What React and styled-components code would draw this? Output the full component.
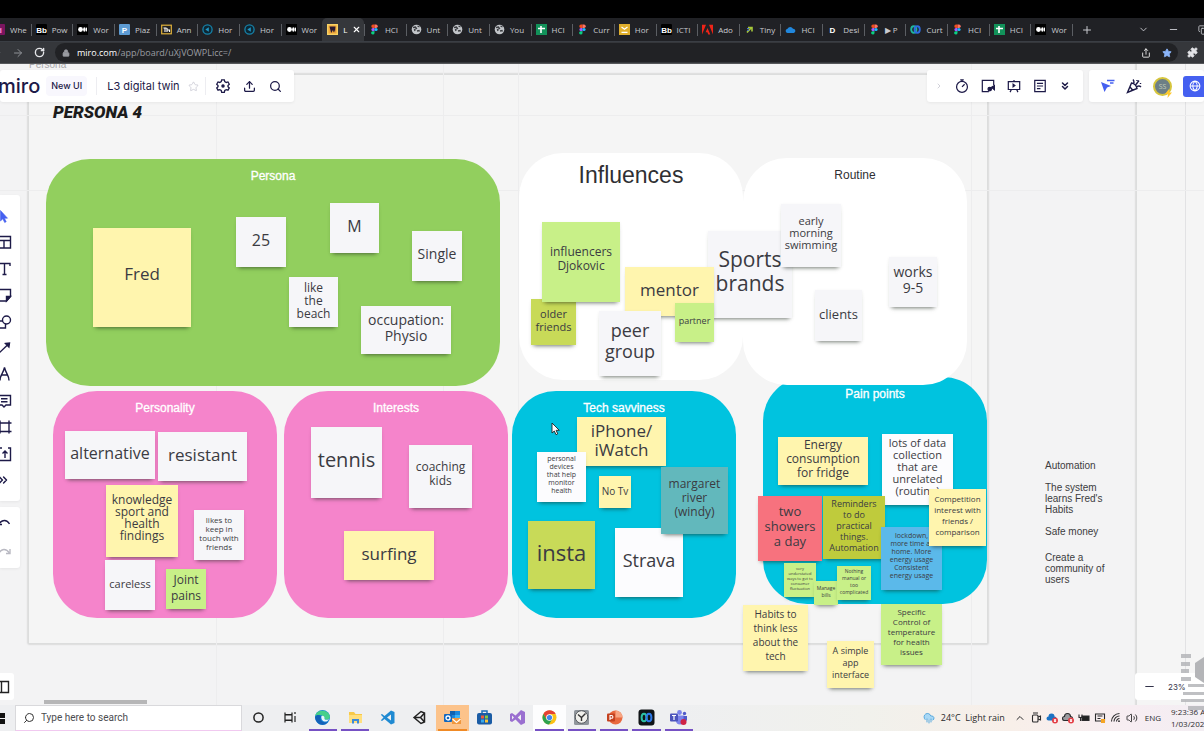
import React from "react";
import styled, { createGlobalStyle, css } from "styled-components";
import {
  ArrowRight, ChevronDown, ChevronRight, ChevronUp, ChevronsDown, ChevronsRight, CloudRain,
  Lock, Minus, Plus, Puzzle, RotateCw, Search, Share, Star, Upload,
  Volume2, X, Copy,
} from "lucide-react";

const ui = '"Open Sans", "Noto Sans", sans-serif';
const arial = '"Liberation Sans", Arial, sans-serif';
const ink = "#1d1a48";

const Global = createGlobalStyle`
  * { box-sizing: border-box; }
  body { margin: 0; font-family: ${ui}; background: #f3f3f4; overflow: hidden; }
  button { border: 0; padding: 0; margin: 0; background: none; font: inherit; color: inherit; }
  h1, h2, p { margin: 0; font-weight: 400; }
`;

const Page = styled.div`
  position: relative;
  display: flex;
  flex-direction: column;
  height: 100vh;
  overflow: hidden;
`;
const TopBlack = styled.div`
  flex: none;
  height: 18px;
  background: #000;
`;

/* ---------- browser ---------- */
const TabStrip = styled.div`
  display: flex;
  flex: none;
  height: 24px;
  background: #202125;
  color: #c9cbd0;
  border-bottom: 1px solid #3a3e44;
`;
const Tabs = styled.div`
  display: flex;
  flex: 1;
  min-width: 0;
  margin-left: -11px;
`;
const Tab = styled.button`
  flex: 1;
  min-width: 0;
  display: flex;
  align-items: center;
  gap: 5px;
  padding: 0 0 0 5px;
  font-size: 8px;
  line-height: 12px;
  text-align: left;
  white-space: nowrap;
  background: linear-gradient(#5b5e63, #5b5e63) 0 6px / 1px 12px no-repeat;
  svg { flex: none; }
  ${(p) => p.$active && css`
    background: #35373b;
    border-radius: 5px 5px 0 0;
    color: #fff;
  `}
`;
const WindowControls = styled.div`
  flex: none;
  width: 132px;
  display: flex;
  align-items: center;
  padding-left: 9px;
  background: linear-gradient(#5b5e63, #5b5e63) 0 6px / 1px 12px no-repeat;
  overflow: hidden;
  button { display: flex; align-items: center; justify-content: center; flex: none; width: 12px; height: 12px; }
  button:nth-child(2) { margin-left: 44px; }
  button:nth-child(3) { margin-left: 18px; }
  button:nth-child(4) { margin-left: 18px; }
`;
const AddressRow = styled.div`
  display: flex;
  align-items: center;
  flex: none;
  height: 22px;
  background: #35373b;
  color: #d6d8dc;
  border-bottom: 1px solid #55575a;
  button { display: flex; flex: none; }
`;
const NavButtons = styled.div`
  display: flex;
  flex: none;
  align-items: center;
  gap: 10px;
  width: 54px;
  margin-left: -9px;
  color: #8f9297;
  button:last-child { color: #e4e5e8; }
`;
const Omnibox = styled.label`
  flex: 1;
  display: flex;
  align-items: center;
  height: 19px;
  padding: 0 6px 0 7px;
  margin-left: 10px;
  border-radius: 10px;
  background: #212225;
  font-size: 9px;
  line-height: 12px;
  color: #fff;
  > svg { margin-right: 7px; }
  input {
    flex: 1;
    border: 0;
    padding: 0;
    background: none;
    font: inherit;
    color: #9a9ca1;
    outline: none;
  }
`;
const OmniActions = styled.span`
  display: flex;
  gap: 11px;
`;
const Extension = styled.button`
  width: 26px;
  padding-left: 9px;
  overflow: hidden;
`;

const Glyph = ({ t, bg, fg, r = 1 }) => (
  <svg width="11" height="11" viewBox="0 0 11 11">
    <rect width="11" height="11" rx={r} fill={bg} />
    <text x="5.5" y="8.5" textAnchor="middle" fontSize="8" fontWeight="700" fontFamily="Liberation Sans, sans-serif" fill={fg}>{t}</text>
  </svg>
);
const icons = {
  id: () => <Glyph t="d" bg="#7a1560" fg="#ff8ad8" />,
  bb: () => <Glyph t="Bb" bg="#000" fg="#fff" />,
  p: () => <Glyph t="P" bg="#5d9bd3" fg="#fff" />,
  d: () => <Glyph t="D" bg="#202125" fg="#fff" />,
  medium: () => (
    <svg width="11" height="11" viewBox="0 0 11 11">
      <rect width="11" height="11" fill="#000" />
      <circle cx="3.5" cy="5.5" r="2.4" fill="#fff" />
      <ellipse cx="7.4" cy="5.5" rx="1.3" ry="2.2" fill="#fff" />
      <rect x="9" y="3.6" width="1" height="3.8" fill="#fff" />
    </svg>
  ),
  ann: () => (
    <svg width="11" height="11" viewBox="0 0 11 11">
      <rect x=".7" y="1.2" width="9.6" height="8.6" fill="#222" stroke="#e2b33c" strokeWidth="1.2" />
      <path d="M2.5 4h3M4 4v4M6 4v4M6 6h2.5v2" stroke="#fff" strokeWidth="1.1" fill="none" />
    </svg>
  ),
  ring: () => (
    <svg width="11" height="11" viewBox="0 0 11 11">
      <circle cx="5.5" cy="5.5" r="4.6" fill="#0d2734" stroke="#1583ab" strokeWidth="1.3" />
      <path d="M6.800 3.300v4.400L3.300 5.500z" fill="#2196c4" />
    </svg>
  ),
  miro: () => (
    <svg width="11" height="11" viewBox="0 0 11 11">
      <rect x=".7" y=".7" width="9.6" height="9.6" fill="#f0a63a" stroke="#f8d263" strokeWidth="1.4" />
      <path d="M2.500 2.500h6L8 8.500 7 6l-.6 2.500L5.300 6l-.5 2.500H4z" fill="#2a1a30" />
    </svg>
  ),
  figma: () => (
    <svg width="11" height="11" viewBox="0 0 11 11">
      <path d="M5.5 .5H4a1.7 1.7 0 0 0 0 3.4h1.5z" fill="#f24e1e" />
      <path d="M5.5 .5H7a1.7 1.7 0 0 1 0 3.4H5.5z" fill="#ff7262" />
      <path d="M5.5 3.9H4a1.6 1.6 0 0 0 0 3.3h1.5z" fill="#a259ff" />
      <circle cx="7" cy="5.5" r="1.6" fill="#1abcfe" />
      <path d="M5.5 7.2H4a1.7 1.7 0 1 0 1.5 1.7z" fill="#0acf83" />
    </svg>
  ),
  globe: () => (
    <svg width="11" height="11" viewBox="0 0 11 11">
      <circle cx="5.5" cy="5.5" r="4.8" fill="#c2c5c9" />
      <path d="M2 3.500 4.500 3l1 1.500-2 1 .5 1.500M6 7l2-.5.5 1M6.500 2l2 1" fill="none" stroke="#3a3c40" strokeWidth="1.300" />
    </svg>
  ),
  sheet: () => (
    <svg width="11" height="11" viewBox="0 0 11 11">
      <rect width="11" height="11" fill="#12925a" />
      <path d="M5 2v7M2 4.5h7" stroke="#fff" strokeWidth="1.6" />
    </svg>
  ),
  note: () => (
    <svg width="11" height="11" viewBox="0 0 11 11">
      <rect width="11" height="11" fill="#dfae2c" />
      <path d="M2.500 8.300h6M2.500 3l3 2.200L8.500 3" stroke="#fff" strokeWidth="1.300" fill="none" />
    </svg>
  ),
  adobe: () => (
    <svg width="11" height="11" viewBox="0 0 11 11">
      <path d="M0 .8h4L0 10.4zM7 .8h4v9.6zM5.500 4l2.800 6.400H6.200L5.400 8.300H3.600z" fill="#ee2418" />
    </svg>
  ),
  tiny: () => (
    <svg width="11" height="11" viewBox="0 0 11 11">
      <path d="M3 8.5 7 4M4 3.5h4v4" stroke="#a5c83a" strokeWidth="1.6" fill="none" />
      <path d="M3 4.5h2M3 6.3h2" stroke="#4b77d1" strokeWidth="1" />
    </svg>
  ),
  cloud: () => (
    <svg width="11" height="11" viewBox="0 0 11 11">
      <path d="M2.300 9a2.200 2.200 0 0 1 .2-4.300A3 3 0 0 1 8 4.700 2.200 2.200 0 0 1 8.800 9z" fill="#2187dc" />
    </svg>
  ),
  webex: () => (
    <svg width="11" height="11" viewBox="0 0 11 11">
      <ellipse cx="3.800" cy="5.500" rx="2.600" ry="3.300" fill="none" stroke="#1fb79c" strokeWidth="1.900" />
      <ellipse cx="7.200" cy="5.500" rx="2.600" ry="3.300" fill="none" stroke="#2d6be0" strokeWidth="1.900" />
    </svg>
  ),
};

const tabs = [
  ["id", "Whe"], ["bb", "Pow"], ["medium", "Wor"], ["p", "Piaz"], ["ann", "Ann"], ["ring", "Hor"],
  ["ring", "Hor"], ["medium", "Wor"], ["miro", "L", true], ["figma", "HCI"], ["globe", "Unt"],
  ["globe", "Unt"], ["globe", "You"], ["sheet", "HCI"], ["figma", "Curr"], ["note", "Hor"],
  ["bb", "ICTI"], ["adobe", "Ado"], ["tiny", "Tiny"], ["cloud", "HCI"], ["d", "Desi"], ["figma", "▶ P"],
  ["webex", "Curt"], ["figma", "HCI"], ["sheet", "HCI"], ["medium", "Wor"],
];

/* ---------- board ---------- */
const Board = styled.main`
  position: relative;
  flex: 1;
  overflow: hidden;
  background: #f3f3f4;
`;
const Frame = styled.div`
  position: absolute;
  left: ${(p) => p.$x}px;
  top: ${(p) => p.$y}px;
  width: ${(p) => p.$w}px;
  height: ${(p) => p.$h}px;
  background: #f5f5f5;
  border: 1px solid #dcdddd;
  box-shadow: 0 0 2px rgba(0, 0, 0, 0.25);
`;
const GridLine = styled.div`
  position: absolute;
  background: ${(p) => (p.$strong ? "#e2e2e4" : "#ededee")};
  ${(p) => (p.$x !== undefined
    ? css`left: ${p.$x}px; top: 0; bottom: 0; width: 1px;`
    : css`top: ${p.$y}px; left: 0; right: 0; height: 1px;`)}
`;
const FrameName = styled.p`
  position: absolute;
  left: 29px;
  top: -6px;
  font: 10px/14px ${arial};
  color: #a9a9ab;
`;
const BoardTitle = styled.h1`
  position: absolute;
  left: 53px;
  top: 37px;
  font: italic 900 17px/22px Roboto, sans-serif;
  color: #1c1c1c;
  white-space: nowrap;
`;
const Area = styled.section`
  position: absolute;
  left: ${(p) => p.$x}px;
  top: ${(p) => p.$y}px;
  width: ${(p) => p.$w}px;
  height: 227px;
  padding-top: 10px;
  border-radius: 44px;
  background: ${(p) => p.$bg};
  color: ${(p) => (p.$bg === "#ffffff" ? "#2f2f33" : "#fff")};
  text-align: center;
  font-family: ${arial};
`;
const AreaTitle = styled.h2`
  font-size: ${(p) => (p.$big ? 23 : 12)}px;
  line-height: ${(p) => (p.$big ? 24 : 14)}px;
  -webkit-text-stroke: ${(p) => (p.$light ? "0.3px #fff" : "0")};
`;
const paper = {
  yellow: "#fff5ae",
  white: "#f6f6f9",
  pure: "#fcfcfe",
  lime: "#c8f088",
  olive: "#c8da58",
  moss: "#bfcb3c",
  teal: "#62b8bc",
  blue: "#5bb9ea",
  red: "#f7727e",
};
const Note = styled.div`
  position: absolute;
  left: ${(p) => p.$x}px;
  top: ${(p) => p.$y}px;
  width: ${(p) => p.$w}px;
  height: ${(p) => p.$h}px;
  display: flex;
  align-items: center;
  justify-content: center;
  padding-bottom: ${(p) => Math.round(p.$h / 12)}px;
  background: ${(p) => paper[p.$c]};
  box-shadow: 0 4px 4px -3px rgba(30, 40, 30, 0.55), 0 1px 3px rgba(30, 40, 30, 0.08);
  color: #3b3b42;
  text-align: center;
  white-space: pre;
  font-size: ${(p) => p.$s}px;
  line-height: ${(p) => p.$l}px;
`;
const SideText = styled.div`
  position: absolute;
  left: 1045px;
  top: 396px;
  display: flex;
  flex-direction: column;
  gap: 11px;
  font: 10px/11px ${arial};
  color: #3c3c40;
  white-space: pre-line;
  p:last-child { margin-top: 4px; }
`;

const areas = [
  ["Persona", 46, 95, 454, "#92cf5e"],
  ["Influences", 519, 89, 224, "#ffffff"],
  ["Pain points", 763, 313, 224, "#00c3df"],
  ["Routine", 743, 94, 224, "#ffffff"],
  ["Personality", 53, 327, 224, "#f584cb"],
  ["Interests", 284, 327, 224, "#f584cb"],
  ["Tech savviness", 512, 327, 224, "#00c3df"],
];

/* text, x, y, width, height, paper, font size, line height */
const notes = [
  ["Fred", 93, 164, 98, 99, "yellow", 17, 20],
  ["25", 236, 153, 50, 50, "white", 16, 20],
  ["M", 330, 139, 49, 50, "white", 16, 20],
  ["Single", 412, 167, 50, 50, "white", 14, 16],
  ["like\nthe\nbeach", 289, 213, 49, 50, "white", 12, 13],
  ["occupation:\nPhysio", 361, 242, 90, 48, "white", 14, 16],
  ["older\nfriends", 531, 235, 45, 46, "olive", 11, 13],
  ["influencers\nDjokovic", 542, 158, 78, 80, "lime", 12, 14],
  ["Sports\nbrands", 708, 167, 84, 87, "white", 21, 24],
  ["mentor", 625, 203, 89, 49, "yellow", 17, 20],
  ["partner", 675, 239, 39, 39, "lime", 9, 12],
  ["peer\ngroup", 599, 247, 62, 65, "white", 18, 21],
  ["early\nmorning\nswimming", 781, 140, 60, 63, "white", 11, 12],
  ["works\n9-5", 889, 193, 48, 50, "white", 14, 16],
  ["clients", 815, 226, 47, 51, "white", 13, 16],
  ["alternative", 65, 367, 90, 48, "white", 16, 20],
  ["resistant", 158, 368, 89, 49, "white", 17, 20],
  ["knowledge\nsport and\nhealth\nfindings", 106, 421, 72, 72, "yellow", 12, 12],
  ["likes to\nkeep in\ntouch with\nfriends", 194, 446, 50, 50, "white", 8, 9],
  ["careless", 105, 496, 50, 50, "white", 11, 13],
  ["Joint\npains", 166, 505, 40, 40, "lime", 12, 16],
  ["tennis", 311, 363, 71, 71, "white", 20, 24],
  ["coaching\nkids", 409, 381, 63, 63, "white", 12, 14],
  ["surfing", 344, 467, 90, 49, "yellow", 17, 20],
  ["iPhone/\niWatch", 577, 353, 89, 49, "yellow", 17, 19],
  ["personal\ndevices\nthat help\nmonitor\nhealth", 537, 388, 49, 50, "pure", 7, 8],
  ["No Tv", 599, 412, 32, 32, "yellow", 10, 12],
  ["insta", 528, 457, 67, 68, "olive", 22, 26],
  ["Strava", 615, 464, 68, 69, "pure", 18, 22],
  ["margaret\nriver\n(windy)", 661, 403, 67, 67, "teal", 12, 14],
  ["Energy\nconsumption\nfor fridge", 778, 373, 90, 48, "yellow", 12, 14],
  ["lots of data\ncollection\nthat are\nunrelated\n(routine)", 882, 370, 71, 71, "pure", 11, 12],
  ["two\nshowers\na day", 758, 432, 64, 65, "red", 13, 15],
  ["Reminders\nto do\npractical\nthings.\nAutomation", 823, 432, 62, 63, "moss", 9, 11],
  ["lockdown,\nmore time at\nhome. More\nenergy usage\nConsistent\nenergy usage", 881, 463, 61, 63, "blue", 7, 8],
  ["Competition\ninterest with\nfriends /\ncomparison", 929, 425, 57, 57, "yellow", 8, 11],
  ["very\nunderstated\nways to get to\nconsumer\nfluctuation", 784, 499, 32, 34, "lime", 4, 5],
  ["Manage\nbills", 814, 517, 24, 24, "lime", 5, 7],
  ["Nothing\nmanual or\ntoo\ncomplicated", 837, 502, 34, 34, "lime", 5, 7],
  ["Habits to\nthink less\nabout the\ntech", 743, 541, 65, 66, "yellow", 10, 14],
  ["A simple\napp\ninterface", 827, 577, 47, 47, "yellow", 9, 12],
  ["Specific\nControl of\ntemperature\nfor health\nissues", 881, 540, 61, 61, "lime", 8, 10],
];

const Pointer = styled.svg`
  position: absolute;
  left: 551px;
  top: 358px;
`;

/* ---------- board chrome ---------- */
const TopBars = styled.div`
  position: absolute;
  top: 6px;
  left: 0;
  right: 0;
  display: flex;
  align-items: stretch;
  gap: 6px;
  height: 32px;
  color: ${ink};
`;
const Bar = styled.div`
  display: flex;
  align-items: center;
  gap: ${(p) => p.$gap}px;
  padding: ${(p) => p.$pad};
  background: #fff;
  border-radius: 3px;
  box-shadow: 0 1px 3px rgba(0, 0, 0, 0.06);
  overflow: hidden;
  white-space: nowrap;
  button { display: flex; flex: none; }
`;
const Spacer = styled.div`
  flex: 1;
`;
const Logo = styled.a`
  margin-left: -2px;
  font: 500 20px/24px Inter, sans-serif;
  color: ${ink};
  text-decoration: none;
`;
const NewUi = styled.span`
  padding: 0 5px;
  margin-left: 6px;
  border-radius: 4px;
  background: #f8f7fd;
  font: 500 9px/20px Inter, sans-serif;
`;
const BoardName = styled.span`
  padding-left: 10px;
  margin-left: 9px;
  border-left: 1px solid #ededf1;
  font: 400 11px/18px Inter, sans-serif;
`;
const ToolGroup = styled.div`
  display: flex;
  align-items: center;
  gap: 13px;
  padding-left: 10px;
  margin-left: 6px;
  border-left: 1px solid #ededf1;
  height: 18px;
`;
const StarButton = styled.button`
  margin-left: 8px;
  color: #c3c3cf;
`;
const Avatar = styled.button`
  position: relative;
  width: 19px;
  height: 19px;
  border: 2px solid #d6c53c;
  border-radius: 50%;
  background: #6d7f86;
  color: #c3cdb9;
  font-size: 7px;
  align-items: center;
  justify-content: center;
  svg { position: absolute; right: -3px; bottom: -4px; }
`;
const ShareButton = styled.button`
  width: 21px;
  height: 21px;
  padding-left: 6px;
  align-items: center;
  border-radius: 3px 0 0 3px;
  background: #4560f0;
`;
const SideTools = styled.nav`
  position: absolute;
  left: 0;
  top: 131px;
  display: flex;
  flex-direction: column;
  gap: 6px;
`;
const SideGroup = styled.div`
  display: flex;
  flex-direction: column;
  justify-content: space-between;
  width: 20px;
  height: ${(p) => p.$h}px;
  padding: ${(p) => p.$pad}px 0;
  background: #fff;
  border-radius: 0 3px 3px 0;
  box-shadow: 0 1px 3px rgba(0, 0, 0, 0.06);
  overflow: hidden;
  color: ${ink};
  button { display: flex; align-items: center; margin-left: -4px; width: 16px; height: 16px; }
`;
const PanelToggle = styled.button`
  position: absolute;
  left: 0;
  bottom: 5px;
  display: flex;
  align-items: center;
  width: 14px;
  height: 27px;
  overflow: hidden;
  background: #fff;
  border-radius: 0 3px 3px 0;
  svg { flex: none; margin-left: -4px; }
`;
const ScrollThumb = styled.div`
  position: absolute;
  left: 44px;
  bottom: 1px;
  width: 103px;
  height: 4px;
  background: #b6b6b7;
`;
const ZoomBar = styled.div`
  position: absolute;
  right: 0;
  bottom: 5px;
  display: flex;
  align-items: center;
  gap: 12px;
  width: 69px;
  height: 27px;
  padding-left: 8px;
  background: #fff;
  border-radius: 3px 0 0 3px;
  font: 8px/12px Inter, sans-serif;
  color: #33334a;
  button { display: flex; }
`;
const Watermark = styled.svg`
  position: absolute;
  right: 0;
  bottom: 18px;
`;
const SearchIcon = styled(Search)`
  flex: none;
  transform: scaleX(-1);
`;

const S = ({ children, size = 16, ...p }) => (
  <svg width={size} height={size} viewBox="0 0 16 16" fill="none" stroke="currentColor" strokeWidth="1.4" {...p}>{children}</svg>
);
const sideTools = [
  ["Select", <S key="a" fill="#4560f0" stroke="#4560f0"><path d="M4.500 2.500v10.500l2.300-2.200 1.900 3.700 1.500-.8-1.800-3.500h3.100z" strokeWidth=".6" /></S>],
  ["Templates", <S key="b"><path d="M2 2.500h12.500v11.500H2zM2 6.500h12.500M8 6.500V14" /></S>],
  ["Text", <S key="c"><path d="M3 5V2.500h11V5M8.500 2.500v11M6.500 13.500h4" /></S>],
  ["Sticky note", <S key="d"><path d="M2 2.500h12.500v7l-4 4.500H2z" /><path d="M14.500 9.500h-4V14z" fill="currentColor" /></S>],
  ["Shapes", <S key="e"><circle cx="10.500" cy="6" r="4" /><path d="M7 7H2v7h7.500v-4" /></S>],
  ["Connection line", <S key="f"><path d="M2 14 12 4.500" /><path d="M9.500 3.500 13.500 3l-.6 4z" fill="currentColor" /></S>],
  ["Pen", <S key="g"><path d="M4 14.500C4 9 7 8 8.500 1.500 10 8 13 9 13 14.500M6 9h5" /></S>],
  ["Comment", <S key="h"><path d="M2 2.500h12.500V12H10l-2 2-2-2H2zM5 5.800h6.500M5 8.700h6.500" /></S>],
  ["Frame", <S key="i"><path d="M4 1.500v13M13 1.500v13M1 4h14.500M1 12.500h14.500" /></S>],
  ["Upload", <S key="j"><path d="M6 2H2v12.500h12.500V2H12M9 12V5M6.500 7.500 9 5l2.500 2.500" /></S>],
];

/* ---------- taskbar ---------- */
const Taskbar = styled.footer`
  flex: none;
  display: flex;
  align-items: stretch;
  height: 26px;
  overflow: hidden;
  background: linear-gradient(90deg, #eeeff1 0 56%, #f1f1ec 72%, #f8efe9 84%, #f7edf2 94%, #f3eef3);
  color: #2b2b2d;
`;
const StartButton = styled.button`
  flex: none;
  width: 15px;
  display: flex;
  align-items: center;
`;
const SearchBox = styled.label`
  flex: none;
  display: flex;
  align-items: center;
  gap: 6px;
  width: 227px;
  padding: 0 7px;
  background: #fff;
  border: 1px solid #d9d9dc;
  border-bottom-color: #f1c9f0;
  input {
    flex: 1;
    min-width: 0;
    border: 0;
    padding: 0;
    background: none;
    font: 10px/14px Roboto, sans-serif;
    outline: none;
  }
  input::placeholder { color: #4c4c50; opacity: 1; }
`;
const Apps = styled.div`
  display: flex;
  flex: none;
  width: 453px;
`;
const AppButton = styled.button`
  flex: 1;
  display: flex;
  align-items: center;
  justify-content: center;
  background: ${(p) => p.$bg || "transparent"};
  border-bottom: 2px solid transparent;
  padding-top: 1px;
  border-image: ${(p) => (p.$line ? `linear-gradient(90deg, transparent 8%, ${p.$line} 8% 92%, transparent 92%) 1` : "none")};
`;
const Tray = styled.div`
  display: flex;
  align-items: center;
  gap: 4px;
  margin-left: auto;
  flex: none;
  font-size: 9px;
  line-height: 14px;
  white-space: nowrap;
  button { display: flex; flex: none; }
`;
const Weather = styled.button`
  display: flex;
  align-items: center;
  gap: 6px;
  margin-right: 5px;
`;
const Lang = styled.button`
  margin-left: 3px;
  font-size: 8px;
`;
const Clock = styled.time`
  flex: none;
  width: 33px;
  margin-left: 6px;
  overflow: hidden;
  font-size: 8px;
  line-height: 12px;
`;

const A = ({ children }) => <svg width="17" height="17" viewBox="0 0 17 17" fill="none">{children}</svg>;
const purple = "#7651c4";
const apps = [
  ["Cortana", <A key="1"><circle cx="8.500" cy="8.500" r="4.600" stroke="#222" strokeWidth="1.500" /></A>],
  ["Task view", <A key="2"><path d="M3 3.500v2M3 11.500v2M10 3.500v2M10 11.500v2M3 5.500h7M3 11.500h7M3 6v5h7V6zM13 3v2M13 7v6" stroke="#222" strokeWidth="1.200" /></A>],
  ["Edge", <A key="3"><circle cx="8.500" cy="8.500" r="7.500" fill="#1a86d6" /><path d="M1.200 7C2.500 0 14 0 15.900 7c.5 4-4 4.200-5.400 3 1-3-5-5.500-9.300-3z" fill="#46cf8a" /><path d="M1 8c2-3 6-2 6 0-2 4 3 7 7 4.500C11 18 2 16.500 1 8z" fill="#1462b8" /><path d="M7.300 7.500c1-1.500 3.600-.3 3.200 2-.3 1.300 2.500 2 4.500.5-1.500 4-8 3.500-7.700-2.500z" fill="#eaf6fb" /></A>, purple],
  ["File Explorer", <A key="4"><path d="M2 3h5l1.500 2H15v9H2z" fill="#f7c948" /><path d="M2 6h13v8H2z" fill="#ffdf7e" /><path d="M5 14.500V10h7v4.500h-2V12H7v2.500z" fill="#3d8ad8" /></A>, purple],
  ["VS Code", <A key="5"><path d="M12 1.500 15.500 3v11L12 15.500 5.500 10 3 12l-1.200-.8L4.500 8.500 1.800 5.800 3 5l2.500 2zM12 5.500 8 8.500l4 3z" fill="#1f8ad2" fillRule="evenodd" /></A>],
  ["Unity", <A key="6"><path d="m3 8.500 7-6 3.500 1.500v9L10 14.500zM3 8.500h6.500M13.500 4l-4 4.500 4 4.500" stroke="#222" strokeWidth="1.500" /></A>],
  ["Outlook", <A key="7"><path d="M6 2h10v9H6z" fill="#1c87dc" /><path d="M6 2h5v4H6z" fill="#1061b0" /><path d="M11 6h5v4h-5z" fill="#3fb4f5" /><path d="M8 9h9v6H8z" fill="#f0983e" /><path d="m8.500 10 4 3.500 4-3.500" stroke="#fff" strokeWidth="1.200" /><rect x="0" y="5" width="8" height="8" rx="1" fill="#1267bd" /><circle cx="4" cy="9" r="2" stroke="#fff" strokeWidth="1.300" /></A>, "#f08a25", "#fcc38b"],
  ["Store", <A key="8"><path d="M6 4V2h5v2" stroke="#1d6eb8" strokeWidth="1.500" /><rect x="1" y="4" width="15" height="11.500" rx="2" fill="#1a5ca5" /><path d="M5 6.500h3v3H5z" fill="#ef5b3b" /><path d="M9 6.500h3v3H9z" fill="#8bcb3c" /><path d="M5 10.500h3v3H5z" fill="#37a9ea" /><path d="M9 10.500h3v3H9z" fill="#fbc53a" /></A>],
  ["Visual Studio", <A key="9"><path d="M12 1 16 3v11l-4 2-5.500-5.500L3 13l-2-1V5l2-1 3.500 2.500zM12 5.500 8.700 8.500l3.300 3zM3 6.500v4l2-2z" fill="#9a6fd0" fillRule="evenodd" /></A>],
  ["Chrome", <A key="10"><circle cx="8.500" cy="8.500" r="7" fill="#fbc116" /><path d="M2.400 5A7 7 0 0 1 14.700 5H8.500L5.500 10.200z" fill="#e44134" /><path d="M2.400 5A7 7 0 0 0 8 15.500l3.200-5.200-5.700-.1z" fill="#2da14f" /><circle cx="8.500" cy="8.500" r="3.300" fill="#fff" /><circle cx="8.500" cy="8.500" r="2.600" fill="#4186ee" /></A>, purple, "#fdfdfe"],
  ["Clock", <A key="11"><rect x="1" y="1" width="15" height="15" rx="1.500" fill="#8f959b" /><circle cx="8.500" cy="8" r="6.300" fill="#f0f0ec" stroke="#55595e" /><path d="m5 5.500 3.500 3 4-4M8.500 8.500V12" stroke="#333" strokeWidth="1.400" /></A>, purple],
  ["PowerPoint", <A key="12"><circle cx="9.500" cy="8.500" r="7" fill="#e9693f" /><path d="M9.500 1.500a7 7 0 0 1 7 7h-7z" fill="#f7a583" /><rect x="1" y="4.500" width="8" height="8" rx="1" fill="#c4411f" /><path d="M4 11V6.500h1.500a1.300 1.300 0 0 1 0 2.800H4" stroke="#fff" strokeWidth="1.100" /></A>, purple],
  ["Webex", <A key="13"><rect x=".5" y=".5" width="16" height="16" rx="3" fill="#101417" /><ellipse cx="6" cy="8.500" rx="2.400" ry="3.800" stroke="#2cc0a5" strokeWidth="2" /><ellipse cx="11" cy="8.500" rx="2.400" ry="3.800" stroke="#2f7bea" strokeWidth="2" /></A>, purple],
  ["Teams", <A key="14"><circle cx="9.500" cy="3.500" r="2.400" fill="#7b83eb" /><circle cx="14.500" cy="4.500" r="1.700" fill="#5059c9" /><path d="M6 6.500h8v5a4 4 0 0 1-8 0z" fill="#7b83eb" /><path d="M13.500 7H17v4a3 3 0 0 1-3.500 2z" fill="#5059c9" /><rect x="0" y="4.500" width="8" height="8" rx="1" fill="#4b53bc" /><path d="M2 6.500h4M4 6.500v4.500" stroke="#fff" strokeWidth="1.200" /><circle cx="13.500" cy="13" r="3" fill="#cf2346" /></A>, purple],
];
const T = ({ children }) => <svg width="12" height="12" viewBox="0 0 12 12" fill="none" stroke="#2b2b2d" strokeWidth="1.100">{children}</svg>;

export default function App() {
  return (
    <Page>
      <Global />
      <TopBlack />
      <TabStrip>
        <Tabs role="tablist">
          {tabs.map(([icon, name, active], i) => {
            const Icon = icons[icon];
            return (
              <Tab key={i} role="tab" $active={active} aria-selected={!!active}>
                <Icon />
                <span>{name}</span>
                {active && <X size={9} strokeWidth={3} />}
              </Tab>
            );
          })}
        </Tabs>
        <WindowControls>
          <button aria-label="New tab"><Plus size={12} /></button>
          <button aria-label="Search tabs"><ChevronDown size={11} /></button>
          <button aria-label="Minimize"><Minus size={11} /></button>
          <button aria-label="Restore"><Copy size={10} /></button>
        </WindowControls>
      </TabStrip>
      <AddressRow>
        <NavButtons>
          <button aria-label="Back"><ArrowRight size={11} /></button>
          <button aria-label="Forward"><ArrowRight size={12} /></button>
          <button aria-label="Reload"><RotateCw size={11} strokeWidth={3} /></button>
        </NavButtons>
        <Omnibox>
          <Lock size={8} fill="#9a9ca1" color="#9a9ca1" />
          miro.com
          <input aria-label="Address" defaultValue="/app/board/uXjVOWPLicc=/" />
          <OmniActions>
            <button aria-label="Share page"><Share size={10} /></button>
            <button aria-label="Bookmark"><Star size={10} fill="#8ab4f8" color="#8ab4f8" /></button>
          </OmniActions>
        </Omnibox>
        <Extension aria-label="Extensions"><Puzzle size={11} fill="#e4e5e8" /></Extension>
      </AddressRow>

      <Board>
        <Frame $x={28} $y={10} $w={960} $h={570} />
        <Frame $x={1136} $y={-10} $w={200} $h={680} />
        <GridLine $x={216} />
        <GridLine $x={443} />
        <GridLine $x={518} />
        <GridLine $x={971} />
        <GridLine $x={1185} $strong />
        <GridLine $y={51} />
        <GridLine $y={126} />
        <FrameName>Persona</FrameName>
        <BoardTitle>PERSONA 4</BoardTitle>
        {areas.map(([title, x, y, w, bg]) => (
          <Area key={title} $x={x} $y={y} $w={w} $bg={bg}>
            <AreaTitle $big={title === "Influences"} $light={bg !== "#ffffff"}>{title}</AreaTitle>
          </Area>
        ))}
        {notes.map(([text, x, y, w, h, c, s, l]) => (
          <Note key={text} $x={x} $y={y} $w={w} $h={h} $c={c} $s={s} $l={l}>{text}</Note>
        ))}
        <SideText>
          <p>Automation</p>
          <p>{"The system\nlearns Fred's\nHabits"}</p>
          <p>Safe money</p>
          <p>{"Create a\ncommunity of\nusers"}</p>
        </SideText>
        <Pointer width="10" height="14" viewBox="0 0 10 14">
          <path d="M1 1v10l2.300-2 1.700 3.700 1.700-.8L5.100 8.300h3.200z" fill="#fff" stroke="#222" strokeWidth=".9" />
        </Pointer>

        <TopBars>
          <Bar $gap={0} $pad="0 12px 0 0">
            <Logo href="#home">miro</Logo>
            <NewUi>New UI</NewUi>
            <BoardName>L3 digital twin</BoardName>
            <StarButton aria-label="Star board"><Star size={11} strokeWidth={1.500} /></StarButton>
            <ToolGroup>
              <button aria-label="Settings">
                <S size={14}><path d="M6.500 1h3l.5 2 1.700 1 2-.6 1.500 2.600L13.700 7.500v1.200l1.500 1.500-1.500 2.600-2-.6-1.700 1-.5 2h-3L6 13.200l-1.700-1-2 .6L.8 10.200l1.500-1.500V7.500L.8 6l1.500-2.600 2 .6L6 3z" strokeWidth="1.500" /><circle cx="8" cy="8" r="1.300" fill="currentColor" /></S>
              </button>
              <button aria-label="Export"><Upload size={13} strokeWidth={2.300} /></button>
              <button aria-label="Search"><Search size={13} strokeWidth={2.300} /></button>
            </ToolGroup>
          </Bar>
          <Spacer />
          <Bar $gap={12} $pad="0 12px 0 8px">
            <button aria-label="Expand"><ChevronRight size={8} color="#b9b9c6" /></button>
            <button aria-label="Timer"><S size={14}><circle cx="8" cy="9" r="6.200" /><path d="M8 9l3-3M6 1h4M8 1v2" /></S></button>
            <button aria-label="Frames"><S size={14}><path d="M14.500 7V1.500h-13v13H9" /><circle cx="10" cy="11.500" r="2" fill="currentColor" /><path d="M12 9.500 15.500 7.500v5z" fill="currentColor" /></S></button>
            <button aria-label="Present"><S size={14}><path d="M1.500 3h13v9h-13zM8 1v2M5 12l-1.500 3M11 12l1.500 3" /><path d="M7 6v3l2-1.500z" fill="currentColor" /></S></button>
            <button aria-label="Notes"><S size={14}><path d="M2 1.500h12v13H2zM4.500 5h7M4.500 8h7M4.500 11h4" /></S></button>
            <button aria-label="More apps"><ChevronsDown size={12} strokeWidth={3} /></button>
          </Bar>
          <Bar $gap={11} $pad="0 0 0 10px">
            <button aria-label="Collaborators' cursors"><S size={16} stroke="none" fill="#4560f0"><path d="M2 4l10 4-4 1.500L5.500 14z" /><path d="M8 2.500h7.500M11 5h3.500" stroke="#4560f0" strokeWidth="1.300" /></S></button>
            <button aria-label="Reactions"><S><path d="M5.500 5 1.500 14.500 11 10.500C10.500 8 8.500 5.500 5.500 5zM4 9l3 3.500M8 5c0-1.500 0-2.500-1-3.500M10 6.500l3-4M11 8.500c1.500-.8 3-.5 4 .5M11 2v1M14.500 5v1" /></S></button>
            <Avatar aria-label="Profile">SS<svg width="9" height="9" viewBox="0 0 9 9"><path d="M5 0 1 5h3L3.500 9 8 3.500H5z" fill="#ffc72e" /></svg></Avatar>
            <ShareButton aria-label="Share">
              <S size={12} stroke="#fff"><circle cx="8" cy="8" r="6.500" /><path d="M1.500 8h13M8 1.500c-4 3.500-4 9.500 0 13M8 1.500c4 3.500 4 9.500 0 13" /></S>
            </ShareButton>
          </Bar>
        </TopBars>

        <SideTools aria-label="Tools">
          <SideGroup $h={306} $pad={13}>
            {sideTools.map(([name, icon]) => <button key={name} aria-label={name}>{icon}</button>)}
            <button aria-label="More"><ChevronsRight size={14} strokeWidth={2.500} /></button>
          </SideGroup>
          <SideGroup $h={61} $pad={8}>
            <button aria-label="Undo"><S><path d="M3 9c3-5 8-4.500 10.500 0" /><path d="M2 5v4.500h4" /></S></button>
            <button aria-label="Redo"><S stroke="#b9b9c2"><path d="M3 9c2.500-4.500 7-5 10.500 0" /><path d="M14 5v4.500h-4" /></S></button>
          </SideGroup>
        </SideTools>
        <PanelToggle aria-label="Frames panel"><S size={16} stroke="#222"><path d="M1.500 2.500h11v11h-11zM5.500 2.500v11" /></S></PanelToggle>
        <ScrollThumb />
        <ZoomBar>
          <button aria-label="Zoom out"><Minus size={13} /></button>
          <span>23%</span>
        </ZoomBar>
      </Board>

      <Taskbar>
        <StartButton aria-label="Start">
          <svg width="5" height="11" viewBox="0 0 5 11"><path d="M0 0h5v5H0zM0 6h5v5H0z" fill="#111" /></svg>
        </StartButton>
        <SearchBox>
          <SearchIcon size={12} color="#333" />
          <input type="search" aria-label="Search" placeholder="Type here to search" />
        </SearchBox>
        <Apps>
          {apps.map(([name, icon, line, bg]) => (
            <AppButton key={name} aria-label={name} $line={line} $bg={bg}>{icon}</AppButton>
          ))}
        </Apps>
        <Tray>
          <Weather>
            <CloudRain size={12} color="#58a9de" fill="#a9d8f5" />
            <span>24°C&nbsp; Light rain</span>
          </Weather>
          <button aria-label="Hidden icons"><ChevronUp size={12} /></button>
          <button aria-label="Meet now"><T><rect x="2.500" y="3" width="5.500" height="7" rx="1" /><path d="M3 1h5M8 5l2.500-1v4L8 7" /></T></button>
          <button aria-label="OneDrive work"><T><path d="M2.500 8.500a2 2 0 0 1 0-4 3 3 0 0 1 6 0 2 2 0 0 1 0 4z" fill="#1b72c4" stroke="none" /><circle cx="9" cy="8.500" r="3" fill="#e33d45" stroke="none" /><path d="m8 7.500 2 2m0-2-2 2" stroke="#fff" /></T></button>
          <button aria-label="OneDrive"><T><path d="M2.500 8.500a2 2 0 0 1 0-4 3 3 0 0 1 6 0 2 2 0 0 1 0 4z" fill="#9b9b9f" /><circle cx="9" cy="8.500" r="3" fill="#e33d45" stroke="none" /><path d="m8 7.500 2 2m0-2-2 2" stroke="#fff" /></T></button>
          <button aria-label="Battery"><T><path d="M4 4h7v4.500H4z" fill="#222" /><path d="M1 2.500v3h3v-3M2.500 5.500V9" /></T></button>
          <button aria-label="Updates"><T><path d="M1.500 2h9v7h-9zM3.500 4h5M3.500 6.500h3" /><rect x="7" y="7" width="4" height="4" fill="#f5a524" stroke="none" /></T></button>
          <button aria-label="Network"><T><path d="M1.500 9.500a8 8 0 0 1 8-8M4 9.500A5.500 5.500 0 0 1 9.500 4M6.500 9.500a3 3 0 0 1 3-3" /><circle cx="9" cy="9.200" r=".9" fill="#2b2b2d" stroke="none" /></T></button>
          <button aria-label="Volume"><Volume2 size={12} strokeWidth={1.800} /></button>
          <Lang>ENG</Lang>
          <Clock>9:23:36 AM<br />1/03/2022</Clock>
        </Tray>
      </Taskbar>
      <Watermark width="24" height="60" viewBox="0 0 24 60" fill="#b4b5b8" aria-hidden="true">
        <path d="M1 1h10v4H1zM1 9h9v4H1zM1 16h8v4H1zM1 24h10v4H1zM8 31h16v3H8zM3 39h21v3H3zM1 46h23v3H1zM8 53h16v4H8z" opacity=".85" />
        <path d="M24 4 15 10v14l9 6z" />
      </Watermark>
    </Page>
  );
}
